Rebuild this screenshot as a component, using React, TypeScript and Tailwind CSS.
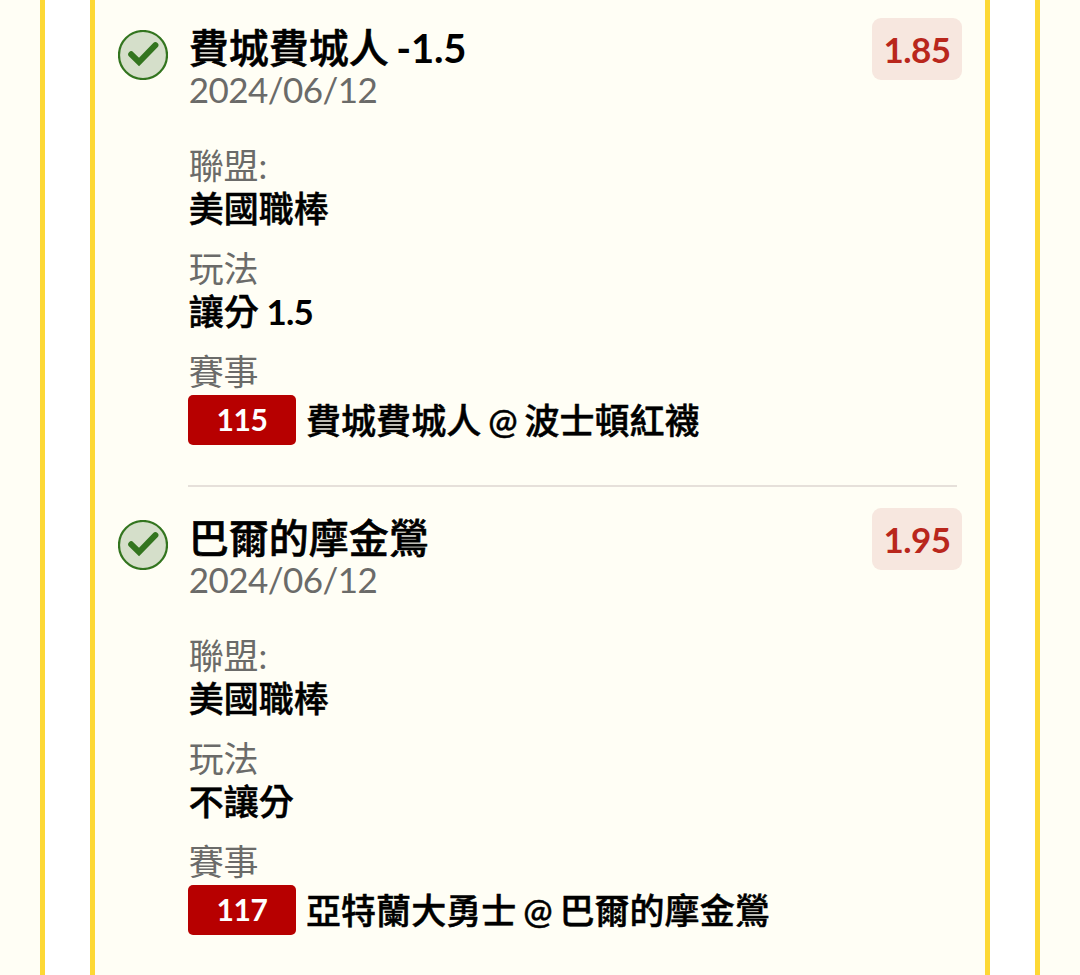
import type { ReactNode } from 'react';

type Pick = {
  title: string;
  line?: string;
  date: string;
  odds: string;
  league: string;
  play: string;
  playLine?: string;
  code: string;
  match: string;
};

const picks: Pick[] = [
  {
    title: '費城費城人',
    line: '-1.5',
    date: '2024/06/12',
    odds: '1.85',
    league: '美國職棒',
    play: '讓分',
    playLine: '1.5',
    code: '115',
    match: '費城費城人 @ 波士頓紅襪',
  },
  {
    title: '巴爾的摩金鶯',
    date: '2024/06/12',
    odds: '1.95',
    league: '美國職棒',
    play: '不讓分',
    code: '117',
    match: '亞特蘭大勇士 @ 巴爾的摩金鶯',
  },
];

function WonIcon() {
  return (
    <svg className="mt-[30px] h-[50px] w-[50px] shrink-0" viewBox="0 0 50 50" fill="none">
      <circle cx="25" cy="25" r="24" fill="#d5dfca" stroke="#33751f" strokeWidth="2.2" />
      <path d="M13.2 24.3 L21 32 L37.4 15.2" stroke="#33751f" strokeWidth="6" strokeLinecap="round" strokeLinejoin="miter" />
    </svg>
  );
}

function Field({ label, children }: { label: string; children: ReactNode }) {
  return (
    <div className="h-[103px]">
      <div className="h-[43px] pl-[0.7px] text-[35px] leading-[43px] tracking-[-0.1px] text-[#6b6b69]">{label}</div>
      <div className="h-[43px] text-[35px] leading-[43px] font-medium text-black [-webkit-text-stroke:0.5px_black]">
        {children}
      </div>
    </div>
  );
}

function PickRow({ pick, divider }: { pick: Pick; divider: boolean }) {
  return (
    <div className="flex h-[490px] pl-[23px]">
      <WonIcon />
      <div className="ml-[20px] w-[774px] shrink-0">
        <div className="flex h-[143.5px] justify-between">
          <div className="pt-[26px] pl-[0.7px]">
            <div className="h-[44px] text-[40px] leading-[44px] font-medium [word-spacing:-2px] whitespace-nowrap text-black [-webkit-text-stroke:0.6px_black]">
              {pick.title}
              {pick.line && <span className="font-bold tracking-[-0.2px] [-webkit-text-stroke:0]"> {pick.line}</span>}
            </div>
            <div className="text-[35px] leading-[39px] tracking-[-0.55px] text-[#6b6b69]">{pick.date}</div>
          </div>
          <div className="mt-[18px] flex h-[62px] w-[90px] items-center justify-center rounded-[9px] bg-[#f7e7df] text-[35px] font-bold tracking-[-0.5px] text-[#b9271c]">
            {pick.odds}
          </div>
        </div>
        <Field label="聯盟:">
          <span className="pl-[0.7px]">{pick.league}</span>
        </Field>
        <Field label="玩法">
          <span className="pl-[0.7px]">{pick.play}</span>
          {pick.playLine && <span className="font-bold tracking-[-0.8px] [-webkit-text-stroke:0]"> {pick.playLine}</span>}
        </Field>
        <Field label="賽事">
          <div className="mt-[2px] flex h-[50px] items-center whitespace-nowrap">
            <span className="mr-[10px] flex h-[50px] w-[108px] shrink-0 items-center justify-center rounded-[5px] bg-[#b70000] text-[30px] font-bold tracking-[-0.4px] text-white [-webkit-text-stroke:0]">
              {pick.code}
            </span>
            <span className="pt-[2px] tracking-[0.05px] [word-spacing:-2px]">{pick.match}</span>
          </div>
        </Field>
        {divider && <div className="mt-[32px] h-[2px] w-[769px] bg-[#e6e0da]" />}
      </div>
    </div>
  );
}

export default function App() {
  return (
    <div className="flex h-[975px] w-[1080px] justify-center overflow-hidden bg-[#fffef5] font-[Lato,'Noto_Sans_CJK_TC',sans-serif]">
      <div className="flex w-[1000px] justify-center border-x-[5px] border-[#fdd835] bg-white">
        <div className="w-[900px] border-x-[5px] border-[#fdd835] bg-[#fffef5]">
          {picks.map((pick, i) => (
            <PickRow key={pick.title} pick={pick} divider={i < picks.length - 1} />
          ))}
        </div>
      </div>
    </div>
  );
}
